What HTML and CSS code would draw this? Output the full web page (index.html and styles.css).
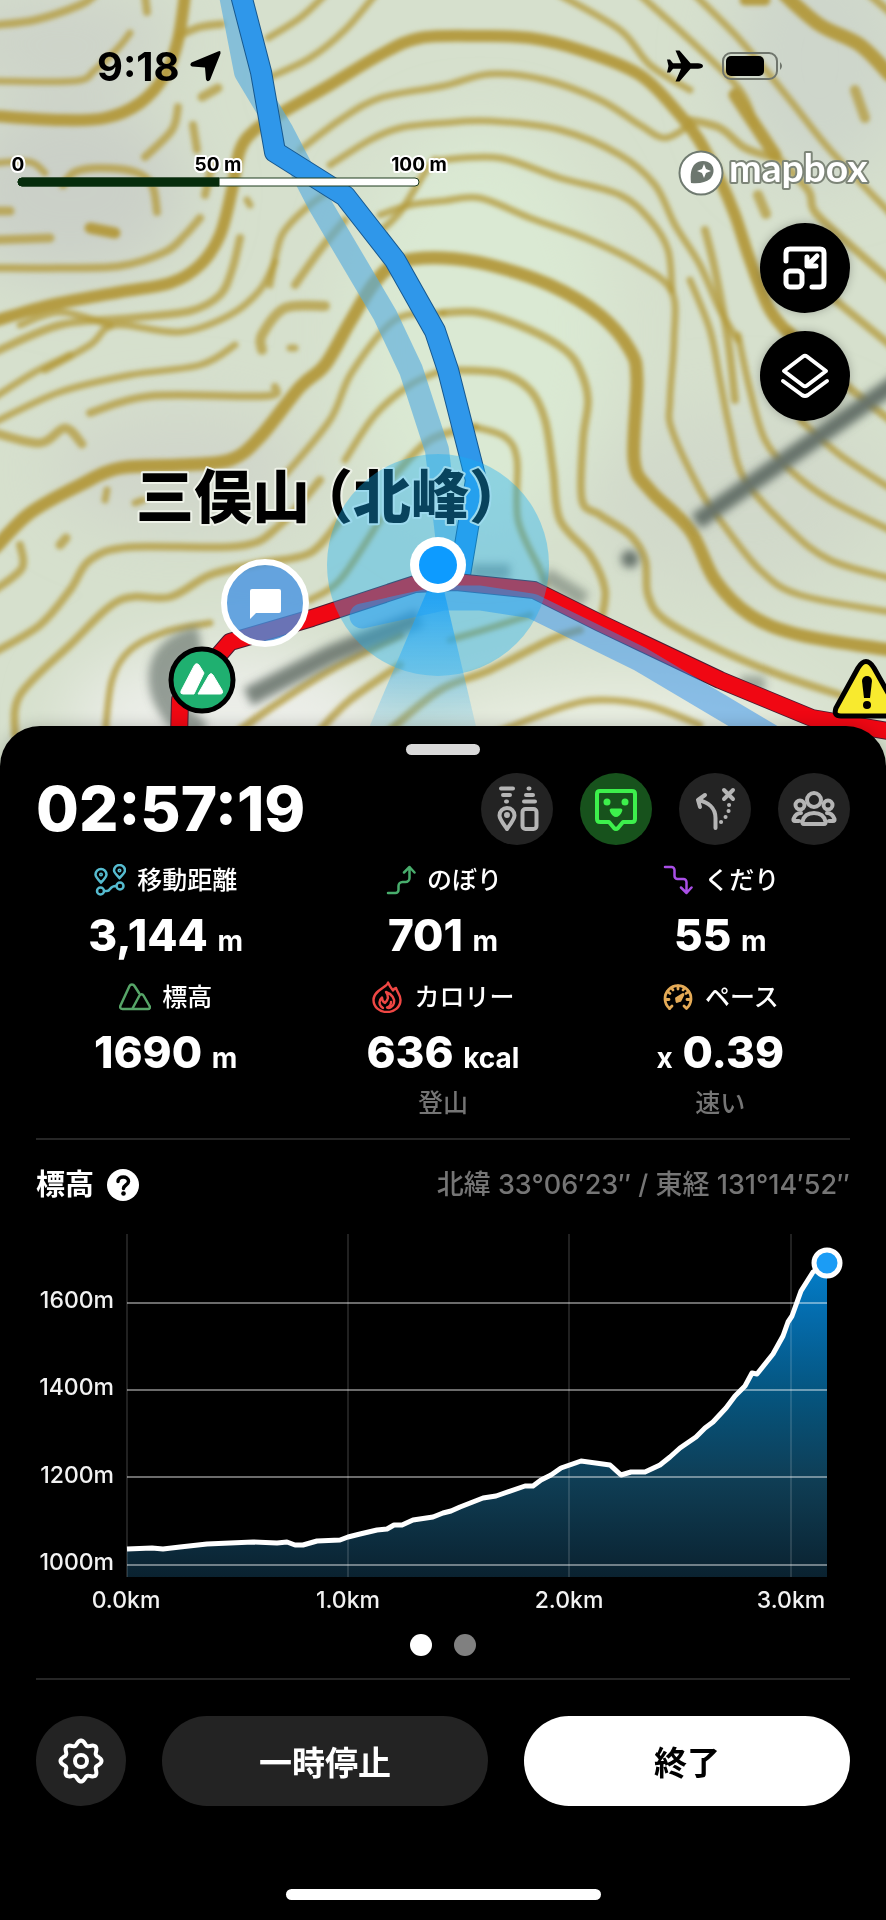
FILE: index.html
```html
<!DOCTYPE html>
<html lang="ja">
<head>
<meta charset="utf-8">
<meta name="viewport" content="width=device-width, initial-scale=1">
<title>活動中 - 三俣山</title>
<link rel="stylesheet" href="styles.css">
</head>
<body>
<main class="app">
  <section class="map" aria-label="地図">
    <svg class="map-canvas" viewBox="0 0 886 772" preserveAspectRatio="xMidYMin slice" aria-hidden="true">
      <defs>
        <filter id="soft" x="-5%" y="-5%" width="110%" height="110%"><feGaussianBlur stdDeviation="2"/></filter>
        <filter id="smudge" x="-30%" y="-30%" width="160%" height="160%"><feGaussianBlur stdDeviation="4"/></filter>
        <filter id="haze" x="-50%" y="-50%" width="200%" height="200%"><feGaussianBlur stdDeviation="32"/></filter>
        <linearGradient id="cone" x1="0" y1="565" x2="0" y2="745" gradientUnits="userSpaceOnUse">
          <stop offset="0" stop-color="#0a98f5" stop-opacity=".95"/>
          <stop offset="1" stop-color="#5cc4f5" stop-opacity=".1"/>
        </linearGradient>
      </defs>
      <rect width="886" height="772" fill="#d6e0cd"/>
      <g filter="url(#haze)">
        <ellipse cx="70" cy="190" rx="120" ry="90" fill="#cbd0c8"/>
        <ellipse cx="60" cy="40" rx="120" ry="50" fill="#cdd3c9"/>
        <ellipse cx="820" cy="60" rx="90" ry="120" fill="#ced6cb"/>
        <ellipse cx="740" cy="500" rx="150" ry="90" fill="#d1d9ca"/>
        <ellipse cx="480" cy="330" rx="130" ry="200" fill="#dae9d3"/>
        <ellipse cx="180" cy="470" rx="130" ry="60" fill="#d0d6ca"/>
        <ellipse cx="230" cy="720" rx="160" ry="70" fill="#eceee9"/>
        <ellipse cx="620" cy="740" rx="200" ry="60" fill="#e9eee2"/>
      </g>
      <g id="contours" filter="url(#soft)" fill="none" stroke="#b3993b" stroke-linecap="round" stroke-linejoin="round"></g>
      <g filter="url(#smudge)" fill="none" stroke="#66726a" stroke-linecap="butt">
        <path d="M696 522L900 380" stroke-width="17"/>
        <path d="M248 697L330 655L420 618" stroke-width="19" opacity=".85"/>
        <path d="M200 735C150 700 150 650 200 640" stroke-width="28" opacity=".65"/>
        <path d="M545 575L585 600M470 572h40M740 684h25" stroke-width="16" opacity=".55"/>
        <circle cx="630" cy="559" r="9" fill="#66726a" stroke="none"/>
      </g>
      <g fill="none" stroke-linejoin="round">
        <path d="M231 -5L246 72L282 132L320 205L385 315L411 370L437 450L450 560" stroke="#5aaedd" stroke-opacity=".65" stroke-width="24"/>
        <path d="M241 -5L261 72L275 152L345 196L395 260L435 331L448 370L476 480L460 575" stroke="#17588f" stroke-width="22"/>
        <path d="M241 -5L261 72L275 152L345 196L395 260L435 331L448 370L476 480L460 575" stroke="#2f97ea" stroke-width="20"/>
        <path d="M178 775L180 700L230 642L312 618L415 584L456 582L534 590L600 623L720 680L812 718L900 733" stroke="#4a1d33" stroke-width="18"/>
        <path d="M178 775L180 700L230 642L312 618L415 584L456 582L534 590L600 623L720 680L812 718L900 733" stroke="#f00713" stroke-width="16"/>
        <path d="M362 616L443 598L480 598L532 606L640 659L790 748" stroke="#2e8ff0" stroke-opacity=".5" stroke-width="25" stroke-linecap="round"/>
      </g>
      <g class="summit-name">
        <text x="136" y="518">三俣山</text>
        <text x="295" y="518">（北峰）</text>
      </g>
      <circle cx="438" cy="565" r="111" fill="#16b0f5" fill-opacity=".38"/>
      <path d="M438 565L366 735Q420 760 478 735Z" fill="url(#cone)"/>
      <circle cx="438" cy="565" r="28" fill="#fff"/>
      <circle cx="438" cy="565" r="19" fill="#0d9bff"/>

      <circle cx="265" cy="603" r="41" fill="#4492e3" fill-opacity=".78" stroke="#fff" stroke-width="6"/>
      <path d="M252 589h27a2 2 0 0 1 2 2v20a2 2 0 0 1-2 2h-23l-6 6v-28a2 2 0 0 1 2-2z" fill="#fff"/>

      <circle cx="202" cy="680" r="31" fill="#1fb070" stroke="#000" stroke-width="5"/>
      <path d="M181 691L194 666Q196 662 199 665L204 673L194 694H183Q180 694 181 691ZM198 694L209 675Q211 672 213 675L222 690Q224 694 220 694Z" fill="#fff" stroke="#fff" stroke-width="1" stroke-linejoin="round"/>

      <path d="M858 668Q866 655 874 668L897 709Q899 716 891 716H841Q833 716 836 708Z" fill="#f8ea2e" stroke="#000" stroke-width="5" stroke-linejoin="round"/>
      <path d="M862 681a5 5 0 0 1 10 0l-2 17h-6z" fill="#000"/>
      <circle cx="867" cy="705" r="4" fill="#000"/>
    </svg>

    <header class="status-bar">
      <div class="status-time">
        <time>9:18</time>
        <svg width="34" height="34" viewBox="0 0 34 34" aria-label="位置情報"><path d="M29 2.500Q32 1 31.500 4.500L21 31Q18.500 33.500 17 30.500L16 18.500L3 17.500Q0 16 2.500 13.500Z"/></svg>
      </div>
      <div class="status-icons">
        <svg width="36" height="32" viewBox="0 0 36 32" aria-label="機内モード"><path d="M36 16c0 1.800-2.500 2.800-5 2.800h-7.500L12.500 31.500H8.500L14 18.800H6L3 22.500H0L1.500 16 0 9.500h3l3 3.700h8L8.500.5h4l11 12.700H31c2.500 0 5 1 5 2.800z"/></svg>
        <svg width="62" height="28" viewBox="0 0 62 28" aria-label="バッテリー"><rect x="1" y="1" width="54" height="26" rx="8" fill="none" stroke="#6f756c" stroke-width="2"/><rect x="4" y="4" width="38" height="20" rx="5"/><path d="M58 10q4 4 0 8z" fill="#6f756c"/></svg>
      </div>
    </header>

    <div class="map-info">
      <svg class="scale" width="460" height="40" viewBox="0 0 460 40" role="img" aria-label="縮尺 100 m">
        <rect x="18" y="28" width="401" height="8" rx="4" fill="#fff" stroke="#1c3a1c"/>
        <path d="M219 28H22a4 4 0 0 0 0 8H219z" fill="#062c0c" stroke="#062c0c"/>
        <g class="scale-text"><text x="18" y="21">0</text><text x="218" y="21">50 m</text><text x="419" y="21">100 m</text></g>
      </svg>
      <a class="mapbox" href="#mapbox" aria-label="mapbox">
        <svg width="200" height="52" viewBox="0 0 200 52">
          <circle cx="25" cy="26" r="21.500" fill="#fff" stroke="#6f7a70" stroke-width="2"/>
          <path d="M15 36C14 27 15 21 19 17C23 13 31 13 35 17C39 21 38 28 34 32C30 35 24 37 15 36Z" fill="#6c766e"/>
          <path d="M28 17l2 5 5 2-5 2-2 5-2-5-5-2 5-2z" fill="#fff"/>
          <text x="53" y="35">mapbox</text>
        </svg>
      </a>
    </div>

    <div class="map-tools">
      <button type="button" aria-label="縮小表示">
        <svg width="48" height="48" viewBox="0 0 48 48" fill="none" stroke="#fff" stroke-width="5" stroke-linecap="round" stroke-linejoin="round"><path d="M5 17V9q0-4 4-4h30q4 0 4 4v30q0 4-4 4h-8"/><rect x="5" y="27" width="16" height="16" rx="4"/><path d="M36 12L28 20M26 13v9h9"/></svg>
      </button>
      <button type="button" aria-label="レイヤー">
        <svg width="52" height="52" viewBox="0 0 52 52" fill="none" stroke="#fff" stroke-width="4" stroke-linecap="round" stroke-linejoin="round"><path d="M24 6.500Q26 5 28 6.500L47 21 28 35.500Q26 37 24 35.500L5 21Z"/><path d="M4 31L23 45Q26 47 29 45L48 31"/></svg>
      </button>
    </div>
  </section>

  <section class="sheet">
    <div class="grip"></div>
    <div class="sheet-head">
      <time class="timer">02:57:19</time>
      <div class="actions">
        <button type="button" aria-label="位置共有">
          <svg width="48" height="48" viewBox="0 0 48 48" fill="none" stroke="#b5b5b5" stroke-width="4" stroke-linecap="round" stroke-linejoin="round"><path d="M8 3.500h12M10 10h7M13 16.500h1M35.500 3.500h1M33 10h7M31 16.500h11"/><path d="M14 44C9 37 6.500 34 6.500 30.500a7.500 7.500 0 0 1 15 0C21.500 34 19 37 14 44Z" stroke-width="4"/><circle cx="14" cy="30" r="1.500" stroke-width="3"/><rect x="29.500" y="24" width="14" height="20" rx="3" stroke-width="4"/></svg>
        </button>
        <button type="button" class="active" aria-label="メッセージ">
          <svg width="48" height="48" viewBox="0 0 48 48" fill="none" stroke="#3df04c" stroke-width="4" stroke-linecap="round" stroke-linejoin="round"><path d="M8 6h32q3 0 3 3v25q0 3-3 3h-9l-5 6q-2 2-4 0l-5-6H8q-3 0-3-3V9q0-3 3-3z"/><g fill="#3df04c" stroke="none"><circle cx="15" cy="17" r="3.500"/><circle cx="33" cy="17" r="3.500"/><path d="M19 23.500h10q2 .5 1 3C29 30 26 32 24 32s-5-2-6-5.500q-1-2.500 1-3z"/></g></svg>
        </button>
        <button type="button" aria-label="分岐">
          <svg width="48" height="48" viewBox="0 0 48 48" fill="none" stroke="#b5b5b5" stroke-width="4" stroke-linecap="round" stroke-linejoin="round"><path d="M24.500 43V33C24.500 23 17 17 7 15M7 15l2 7M7 15l7-5M33 5l9 9M42 5l-9 9"/><path d="M30 37h.1M34.500 32h.1M37.500 26h.1M38 20h.1"/></svg>
        </button>
        <button type="button" aria-label="グループ">
          <svg width="48" height="48" viewBox="0 0 48 48" fill="none" stroke="#b5b5b5" stroke-width="4" stroke-linecap="round" stroke-linejoin="round"><circle cx="24" cy="15" r="7"/><circle cx="10" cy="20" r="4.500"/><circle cx="38" cy="20" r="4.500"/><path d="M14 39q-2 0-1.500-2.500C14 30 19 28 24 28s10 2 11.500 8.500Q36 39 34 39zM9 36H5q-2 0-1.500-2C5 30 7 28 11 28M39 36h4q2 0 1.500-2C43 30 41 28 37 28"/></svg>
        </button>
      </div>
    </div>

    <div class="stats">
      <div class="stat">
        <h2><svg width="32" height="32" viewBox="0 0 32 32" fill="none" stroke="#56bcd0" stroke-width="2.500"><path d="M7 18.500C3 14.500 1.500 13 1.500 10.500a5.500 5.500 0 0 1 11 0C12.500 13 11 14.500 7 18.500zM25.500 14C21.500 10 20 8.500 20 6.500a5.500 5.500 0 0 1 11 0C31 8.500 29.500 10 25.500 14z"/><circle cx="7" cy="10.500" r=".8"/><circle cx="25.500" cy="6.500" r=".8"/><circle cx="6.500" cy="27" r="3.500"/><circle cx="26" cy="22" r="3.500"/><path d="M10 27h3c4 0 2-5 9-5"/></svg>移動距離</h2>
        <p class="value">3,144 <small>m</small></p>
      </div>
      <div class="stat">
        <h2><svg width="32" height="32" viewBox="0 0 32 32" fill="none" stroke="#48ad6c" stroke-width="2.500" stroke-linecap="round" stroke-linejoin="round"><path d="M4 29h7.500a3 3 0 0 0 3-3v-4a4 4 0 0 1 4-4h3a4 4 0 0 0 4-4V3M20 8.500L25.500 3l5 5.500"/></svg>のぼり</h2>
        <p class="value">701 <small>m</small></p>
      </div>
      <div class="stat">
        <h2><svg width="32" height="32" viewBox="0 0 32 32" fill="none" stroke="#a94fe6" stroke-width="2.500" stroke-linecap="round" stroke-linejoin="round"><path d="M4 3h6.500a3 3 0 0 1 3 3v6a3 3 0 0 0 3 3h6a3 3 0 0 1 3 3v10.500M20 23.500l5.500 5.500 5-5.500"/></svg>くだり</h2>
        <p class="value">55 <small>m</small></p>
      </div>
      <div class="stat">
        <h2><svg width="32" height="32" viewBox="0 0 32 32" fill="none" stroke="#57a568" stroke-width="2.500" stroke-linecap="round" stroke-linejoin="round"><path d="M20 12L15.500 5c-1.200-2-4-2-5 0L1.500 24.500c-.8 2 0 3.500 2 3.500H29c1.500 0 2.500-1.500 1.500-3L24.500 14.500c-1-1.800-3-1.800-4 0L13.500 27.500"/></svg>標高</h2>
        <p class="value">1690 <small>m</small></p>
      </div>
      <div class="stat">
        <h2><svg width="32" height="32" viewBox="0 0 32 32" fill="none" stroke="#ef4744" stroke-width="2.400" stroke-linecap="round" stroke-linejoin="round"><path d="M17 1.500C17 6 2.500 9 2.500 19c0 7 6 12 13.500 12s13.500-5 13.500-12C29.500 13 26 11.500 25 7c-2 .5-2.500 1.500-3 2.500C20 7 18.500 5 17 1.500z"/><path d="M12 27C7 24 8 19 11 16.500c0 3 1 4.500 3 5.500 3-3 4-7 1-11 6 2 9 7 8 11-1 4-5 6-7 4.500 3-1 4-3.500 4-5.500"/></svg>カロリー</h2>
        <p class="value">636 <small>kcal</small></p>
        <p class="note">登山</p>
      </div>
      <div class="stat">
        <h2><svg width="32" height="32" viewBox="0 0 32 32" fill="none" stroke="#e5ab57" stroke-width="2.800" stroke-linecap="round" stroke-linejoin="round"><path d="M7.500 27.500A13 13 0 1 1 24.500 27.500l-2.500-2.500"/><path d="M7.500 27.500L10 25M3.500 18.500h3.500M5.500 10.500l2.500 2M16 5v3M9.500 7l1.500 2M22.500 7L21 9M28.500 18.500H25M26.500 10.500l-2.500 2"/><path d="M21 13.500l-3 6-3 1-.5-3z" fill="#e5ab57"/></svg>ペース</h2>
        <p class="value"><small>x</small> 0.39</p>
        <p class="note">速い</p>
      </div>
    </div>

    <div class="elevation">
      <div class="elevation-head">
        <h2>標高</h2>
        <button type="button" aria-label="標高について">
          <svg width="32" height="32" viewBox="0 0 32 32"><circle cx="16" cy="16" r="16" fill="#fff"/><path d="M11 12.500C11 6.500 21.500 6.500 21.500 12.500 21.500 16 16.500 16 16.500 19.500" fill="none" stroke="#000" stroke-width="3.500" stroke-linecap="round"/><circle cx="16.500" cy="24.500" r="2.300"/></svg>
        </button>
        <p>北緯 33°06′23″ / 東経 131°14′52″</p>
      </div>
      <svg class="chart" viewBox="0 0 814 400" role="img" aria-label="標高グラフ">
        <defs><linearGradient id="rise" x1="0" y1="40" x2="0" y2="357" gradientUnits="userSpaceOnUse">
          <stop offset="0" stop-color="#0380cc"/><stop offset=".18" stop-color="#046bab"/><stop offset=".42" stop-color="#05557f"/><stop offset=".7" stop-color="#0f3d54"/><stop offset="1" stop-color="#0a2230"/>
        </linearGradient></defs>
        <path fill="url(#rise)" d="M91 329L116 328L127 329L144 327L171 324L217 322L241 323L251 322L259 325L267 325L281 321L304 320L312 317L324 314L341 310L351 309L358 305L366 305L377 300L397 297L407 293L415 291L424 287L447 278L460 276L489 266L497 266L505 260L515 255L525 248L545 241L574 245L585 255L595 252L609 252L624 245L634 237L644 228L660 217L669 208L677 202L690 188L699 176L709 166L716 153L721 154L737 134L747 116L752 102L756 96L765 71L777 52L791 43V357H91Z"/>
        <g fill="none" stroke="#fff">
          <path stroke-opacity=".13" stroke-width="2" d="M91 14V357M312 14V357M533 14V357M755 14V357"/>
          <path stroke-opacity=".42" stroke-width="2" d="M91 83H791M91 170H791M91 257H791M91 345H791"/>
          <path stroke-width="5" stroke-linejoin="round" d="M91 329L116 328L127 329L144 327L171 324L217 322L241 323L251 322L259 325L267 325L281 321L304 320L312 317L324 314L341 310L351 309L358 305L366 305L377 300L397 297L407 293L415 291L424 287L447 278L460 276L489 266L497 266L505 260L515 255L525 248L545 241L574 245L585 255L595 252L609 252L624 245L634 237L644 228L660 217L669 208L677 202L690 188L699 176L709 166L716 153L721 154L737 134L747 116L752 102L756 96L765 71L777 52L791 43"/>
        </g>
        <circle cx="791" cy="43" r="13" fill="#1b9cf5" stroke="#fff" stroke-width="5"/>
        <g class="axis axis-y"><text x="78" y="88">1600m</text><text x="78" y="175">1400m</text><text x="78" y="263">1200m</text><text x="78" y="350">1000m</text></g>
        <g class="axis axis-x"><text x="90" y="388">0.0km</text><text x="312" y="388">1.0km</text><text x="533" y="388">2.0km</text><text x="755" y="388">3.0km</text></g>
      </svg>
      <div class="pager">
        <button type="button" class="current" aria-label="ページ 1"></button>
        <button type="button" aria-label="ページ 2"></button>
      </div>
    </div>

    <div class="controls">
      <button type="button" class="settings" aria-label="設定">
        <svg width="48" height="48" viewBox="0 0 48 48" fill="none" stroke="#fff" stroke-width="4" stroke-linejoin="round"><path id="gear" d=""/><circle cx="24" cy="24" r="6"/></svg>
      </button>
      <button type="button" class="pause">一時停止</button>
      <button type="button" class="finish">終了</button>
    </div>
    <div class="home-bar"></div>
  </section>
</main>
<script src="map.js"></script>
</body>
</html>
```
FILE: styles.css
```css
* { box-sizing: border-box; }

body {
  margin: 0;
  background: #000;
  color: #fff;
  font-family: Inter, "Noto Sans CJK JP", sans-serif;
}

h2, p { margin: 0; }

button {
  display: grid;
  place-items: center;
  padding: 0;
  border: 0;
  border-radius: 999px;
  background: none;
  color: inherit;
  font: inherit;
  cursor: pointer;
}

svg { display: block; flex: none; }

/* Map */
.map {
  position: relative;
  min-height: 772px;
  padding-top: 45px;
  overflow: hidden;
}

.map-canvas {
  position: absolute;
  inset: 0;
  width: 100%;
  height: 100%;
}

.status-bar, .map-info, .map-tools { position: relative; }

.summit-name {
  font-family: "Noto Sans CJK JP", sans-serif;
  font-size: 58px;
  font-weight: 900;
  fill: #000;
  stroke: #eef2e8;
  stroke-width: 4px;
  stroke-linejoin: round;
  paint-order: stroke;
}

.status-bar {
  display: flex;
  justify-content: space-between;
  align-items: center;
  height: 42px;
  padding: 0 102px 0 97px;
  color: #000;
}

.status-time {
  display: flex;
  align-items: center;
  gap: 9px;
  font-size: 40px;
  font-weight: 700;
}

.status-icons {
  display: flex;
  align-items: center;
  gap: 19px;
}

.map-info {
  display: flex;
  justify-content: space-between;
  align-items: flex-start;
  margin-top: 60px;
  padding-right: 10px;
}

.scale { margin-top: 3px; }

.scale-text {
  font-size: 19px;
  font-weight: 700;
  text-anchor: middle;
  fill: #000;
  stroke: #fff;
  stroke-width: 4px;
  stroke-linejoin: round;
  paint-order: stroke;
}

.mapbox text {
  font-family: Lato, sans-serif;
  font-size: 39px;
  font-weight: 700;
  fill: #fff;
  stroke: #7d8578;
  stroke-width: 4px;
  stroke-linejoin: round;
  paint-order: stroke;
}

.map-tools {
  display: grid;
  justify-content: end;
  gap: 18px;
  margin-top: 24px;
  padding-right: 36px;
}

.map-tools button {
  width: 90px;
  height: 90px;
  background: #000;
  box-shadow: 0 0 10px rgba(0, 0, 0, .25);
}

/* Sheet */
.sheet {
  position: relative;
  margin-top: -46px;
  padding: 18px 36px 19px;
  border-radius: 40px 40px 0 0;
  background: #000;
  box-shadow: 0 0 16px rgba(0, 0, 0, .2);
}

.grip {
  width: 74px;
  height: 11px;
  margin: 0 auto;
  border-radius: 6px;
  background: #d9d9d9;
}

.sheet-head {
  display: flex;
  justify-content: space-between;
  align-items: center;
  margin-top: 18px;
}

.timer {
  font-size: 62px;
  font-weight: 800;
  line-height: 72px;
}

.actions { display: flex; gap: 27px; }

.actions button {
  width: 72px;
  height: 72px;
  background: #232323;
}

.actions .active { background: #17521c; }

.stats {
  display: grid;
  grid-template-columns: repeat(3, 1fr);
  row-gap: 18px;
  margin: 18px -9px 0;
  text-align: center;
}

.stat h2 {
  display: flex;
  justify-content: center;
  align-items: center;
  gap: 11px;
  font-size: 25px;
  font-weight: 500;
  line-height: 34px;
}

.value {
  margin-top: 11px;
  font-size: 44px;
  font-weight: 800;
  line-height: 54px;
  white-space: nowrap;
}

.value small {
  font-size: 28px;
  font-weight: 700;
  line-height: 1;
}

.note {
  margin-top: 7px;
  color: #757575;
  font-size: 25px;
  font-weight: 500;
  line-height: 34px;
}

.elevation {
  margin-top: 18px;
  padding: 28px 0 22px;
  border-top: 2px solid #262626;
  border-bottom: 2px solid #262626;
}

.elevation-head {
  display: flex;
  align-items: center;
  gap: 13px;
  height: 34px;
  line-height: 34px;
}

.elevation-head h2 { font-size: 29px; font-weight: 700; }

.elevation-head p {
  margin-left: auto;
  color: #757575;
  font-size: 27px;
  font-weight: 500;
}

.chart { width: 100%; margin-top: 18px; }

.axis {
  fill: #f2f2f2;
  font-size: 23px;
  font-weight: 500;
}

.axis-y { text-anchor: end; }
.axis-x { text-anchor: middle; }

.pager {
  display: flex;
  justify-content: center;
  gap: 22px;
  margin-top: 14px;
}

.pager button {
  width: 22px;
  height: 22px;
  background: #808080;
}

.pager .current { background: #fff; }

.controls {
  display: grid;
  grid-template-columns: 90px 1fr 1fr;
  gap: 36px;
  margin-top: 36px;
}

.controls button {
  height: 90px;
  background: #232323;
  font-size: 33px;
  font-weight: 700;
}

.controls .finish { background: #fff; color: #000; }

.home-bar {
  width: 315px;
  height: 11px;
  margin: 83px auto 0;
  border-radius: 6px;
  background: #fff;
}
```
FILE: map.js
```javascript
// Contour lines: [stroke width, x, y, x, y, ...]
const contours = [
  [10, 185,-5, 178,40, 165,75, 140,103, 105,118, 60,120, -5,116],
  [6, -5,25, 35,20, 80,5, 95,-5],
  [6, 145,-5, 147,12],
  [6, 178,36, 200,27, 222,24],
  [5, 130,33, 118,48, 95,70, 75,81, -5,81],
  [5, 268,38, 300,18, 325,-5],
  [5, 268,78, 310,58, 345,30, 375,-5],
  [10, -5,321, 50,305, 120,292, 170,283, 200,265, 220,235, 232,190, 240,150, 255,130, 283,112, 330,85, 380,55, 420,38, 480,36, 530,38, 580,50, 640,75, 680,115, 699,140, 720,180, 735,215, 750,260, 770,310, 795,340],
  [5, 300,150, 340,120, 380,98, 443,86, 490,74, 545,80, 600,100, 640,125, 665,138, 690,125],
  [5, 330,165, 370,140, 400,128, 443,123, 490,121, 560,130, 620,155, 655,185, 675,225, 700,265, 720,310, 738,340],
  [5, 270,285, 277,250, 285,230, 310,205, 335,188],
  [6, 295,285, 320,250, 345,220],
  [5, 375,235, 400,212, 430,165, 443,160, 500,158, 560,178, 620,195, 650,220, 668,250, 672,290],
  [5, 380,215, 410,205, 443,201, 480,198, 530,218, 590,240, 640,265, 672,292, 674,340, 670,400, 672,430, 700,490, 720,520, 760,570, 800,595, 890,612],
  [11, -5,548, 30,513, 80,485, 120,468, 180,465, 230,460, 260,437, 300,387, 325,365, 350,322, 375,282, 400,262, 443,258, 490,265, 550,285, 600,315, 630,350, 637,380, 634,460, 650,490, 690,530, 715,580, 750,615, 800,635, 890,650],
  [6, 443,313, 480,313, 530,330, 565,350, 580,370, 588,400, 583,440, 582,500, 600,515, 630,535, 645,560, 648,595, 665,620, 720,650, 780,675, 840,695],
  [6, 443,370, 500,373, 530,390, 545,420, 553,470, 560,520, 590,555, 605,590, 600,625],
  [5, 475,427, 505,437, 517,460, 518,520, 540,570, 545,585],
  [6, -5,268, 60,268, 120,266, 165,252, 185,235, 200,218],
  [6, -5,352, 60,325, 130,318, 190,311, 220,295, 232,270, 240,238],
  [5, 45,370, 90,345, 115,325, 180,332, 230,315, 260,290, 275,262],
  [5, 110,325, 60,312, 20,325],
  [5, -5,163, 30,162, 45,173],
  [6, 63,185, 75,172, 100,168, 135,172, 152,185, 157,212],
  [7, -5,211, 10,211],
  [7, -5,240, 50,238],
  [9, 90,228, 115,233],
  [6, 178,107, 172,130, 145,157],
  [6, 193,125, 197,150],
  [7, 202,97, 218,88],
  [5, 250,205, 247,200],
  [6, 205,195, 212,165],
  [8, 262,350, 262,335, 285,308, 325,306],
  [5, 290,348, 295,348],
  [5, 235,345, 200,365, 130,375, 60,392, -5,422],
  [5, -5,397, 35,372, 70,355],
  [6, 90,413, 150,396, 265,396, 275,387],
  [7, -5,433, 40,443, 65,428, 82,444],
  [5, 285,475, 330,420, 352,372, 395,320, 443,313],
  [5, 345,460, 375,415, 410,385, 443,370],
  [6, 390,480, 430,440, 475,427],
  [6, -5,590, 22,568, 20,545],
  [7, 60,545, 66,538],
  [5, 105,500, 107,490],
  [5, 135,503, 143,500],
  [6, -5,652, 40,625, 70,590, 90,560, 130,547, 240,546, 280,525, 320,480],
  [6, 15,735, 20,695, 70,645, 120,600, 170,597, 210,575, 260,563, 310,553, 340,520],
  [5, 105,735, 112,680, 130,650, 165,632, 210,623],
  [5, 310,600, 340,580, 380,520],
  [6, 240,730, 275,705, 330,670, 400,635],
  [6, 320,730, 350,700, 400,665],
  [6, 390,730, 440,690, 490,670, 550,640, 580,630],
  [5, 450,640, 490,628, 530,615],
  [5, 490,735, 560,708, 600,700, 650,706, 700,725],
  [5, 560,-5, 620,30, 650,65, 690,90],
  [5, 640,-5, 690,40, 740,90, 755,125],
  [12, 785,-5, 820,25, 860,45, 890,75],
  [6, 870,-5, 890,12],
  [5, 695,-5, 740,40, 790,100, 830,150, 890,213],
  [11, 735,95, 755,125, 775,155],
  [6, 690,120, 720,128, 745,148, 775,158],
  [6, 775,155, 808,190, 815,212, 850,245, 890,280],
  [8, 758,195, 766,214],
  [6, 705,230, 715,270, 728,340, 735,400],
  [5, 690,280, 710,330, 720,380, 730,430, 745,480, 790,530, 830,560, 890,578],
  [5, 738,335, 750,390, 765,440, 790,470, 830,500, 890,530],
  [5, 800,420, 840,455, 890,488],
  [8, 855,90, 865,118],
  [6, 835,300, 890,345],
  [6, 790,330, 840,380, 890,420],
  [9, 745,0, 765,0]
];

// Catmull-Rom spline through the points, written as cubic segments.
function spline(p) {
  const n = p.length / 2;
  const at = i => {
    const k = Math.max(0, Math.min(n - 1, i));
    return [p[2 * k], p[2 * k + 1]];
  };
  let d = `M${p[0]} ${p[1]}`;
  for (let i = 0; i < n - 1; i++) {
    const [a, b, c, e] = [at(i - 1), at(i), at(i + 1), at(i + 2)];
    d += `C${b[0] + (c[0] - a[0]) / 6} ${b[1] + (c[1] - a[1]) / 6} ${c[0] - (e[0] - b[0]) / 6} ${c[1] - (e[1] - b[1]) / 6} ${c[0]} ${c[1]}`;
  }
  return d;
}

const layer = document.getElementById("contours");
for (const [width, ...points] of contours) {
  const path = document.createElementNS("http://www.w3.org/2000/svg", "path");
  path.setAttribute("d", spline(points));
  path.setAttribute("stroke-width", width + 2);
  path.setAttribute("stroke-opacity", width > 8 ? 0.95 : 0.75);
  layer.append(path);
}

// Eight-toothed gear outline around (24, 24).
const rim = [];
for (let i = 0; i <= 96; i++) {
  const t = (i / 96) * Math.PI * 2;
  const r = 18.3 + 2.2 * Math.cos(8 * t);
  rim.push(24 + r * Math.sin(t), 24 - r * Math.cos(t));
}
document.getElementById("gear").setAttribute("d", spline(rim) + "Z");
```
